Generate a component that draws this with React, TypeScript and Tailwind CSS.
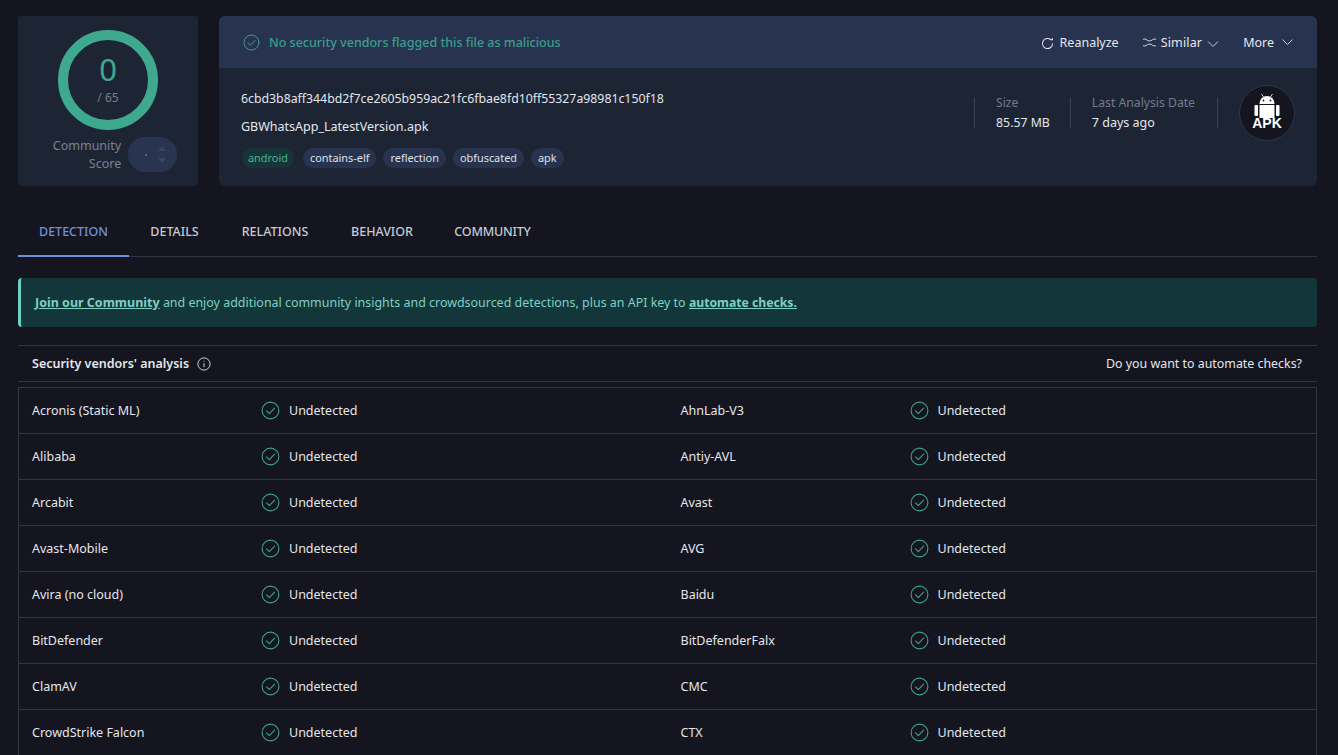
import React from "react";

const F = "font-['Noto_Sans',sans-serif]";

function Check({ className }: { className: string }) {
  return (
    <svg viewBox="0 0 24 24" fill="none" stroke="currentColor" strokeWidth={1.4} strokeLinecap="round" strokeLinejoin="round" className={className}>
      <circle cx="12" cy="12" r="10.6" />
      <path d="M7 12.400l3.500 3.500L17.200 9" />
    </svg>
  );
}

function Chevron({ className }: { className: string }) {
  return (
    <svg viewBox="0 0 12 8" fill="none" stroke="currentColor" strokeWidth={1} className={className}>
      <path d="M1 1.500l5 5 5-5" />
    </svg>
  );
}

const rows = [
  ["Acronis (Static ML)", "AhnLab-V3"],
  ["Alibaba", "Antiy-AVL"],
  ["Arcabit", "Avast"],
  ["Avast-Mobile", "AVG"],
  ["Avira (no cloud)", "Baidu"],
  ["BitDefender", "BitDefenderFalx"],
  ["ClamAV", "CMC"],
  ["CrowdStrike Falcon", "CTX"],
];

const tags = ["contains-elf", "reflection", "obfuscated", "apk"];
const tabs = [
  { t: "DETAILS", w: "w-[91px]" },
  { t: "RELATIONS", w: "w-[110px]" },
  { t: "BEHAVIOR", w: "w-[104px]" },
  { t: "COMMUNITY", w: "w-[117px] tracking-[-0.2px]" },
];

function Cell({ name }: { name: string }) {
  return (
    <div className="flex w-[649px] items-center pl-[13px]">
      <div className="mt-[2px] w-[229px] text-[12.5px] text-[#e4e6ec]">{name}</div>
      <Check className="h-[19px] w-[19px] text-[#3fa08f]" />
      <div className="ml-[9px] mt-[2px] text-[12.5px] text-[#e4e6ec]">Undetected</div>
    </div>
  );
}

export default function App() {
  return (
    <div className={`${F} h-[755px] w-[1338px] overflow-hidden bg-[#14151f] pl-[18px] pr-[21px] pt-[16px]`}>
      <div className="flex h-[170px] gap-[21px]">
        <div className="flex w-[180px] flex-col items-center rounded-[4px] bg-[#1d2535] pt-[14px]">
          <div className="flex h-[100px] w-[100px] flex-col items-center rounded-full border-[10px] border-[#3fa990] pt-[14px]">
            <div className="text-[31px] leading-[30px] text-[#3fa990]">0</div>
            <div className="mt-[6px] text-[12px] leading-[15px] text-[#757c8e]">/ 65</div>
          </div>
          <div className="mt-[6px] flex items-center gap-[7px] pl-[14px]">
            <div className="mt-[1px] text-right text-[12.5px] leading-[18px] text-[#7a8194]">
              Community
              <br />
              Score
            </div>
            <div className="relative h-[35px] w-[49px] rounded-[17px] bg-[#283450]">
              <span className="absolute left-[17px] top-[17px] h-[2px] w-[2px] rounded-full bg-[#6b7389]" />
              <span className="absolute left-[30px] top-[9px] h-0 w-0 border-x-[4px] border-b-[5px] border-x-transparent border-b-[#3a4560]" />
              <span className="absolute left-[30px] top-[21px] h-0 w-0 border-x-[4px] border-t-[5px] border-x-transparent border-t-[#3a4560]" />
            </div>
          </div>
        </div>

        <div className="flex w-[1098px] flex-col overflow-hidden rounded-[6px] bg-[#1d2535]">
          <div className="flex h-[52px] items-center bg-[#28344f] pl-[24px] pr-[23px]">
            <Check className="h-[17px] w-[17px] text-[#3fa08f]" />
            <div className="ml-[9px] mt-[2px] text-[12.5px] font-medium text-[#3b9c8e]">No security vendors flagged this file as malicious</div>
            <div className="ml-auto flex items-center text-[12.5px] text-[#e4e6ec]">
              <svg viewBox="0 0 16 16" fill="none" stroke="currentColor" strokeWidth={1.1} className="mt-[2px] h-[15px] w-[15px]">
                <path d="M13.400 8a5.400 5.400 0 1 1-1.800-4" />
                <path d="M10.800 4.600h3V1.800z" fill="currentColor" stroke="none" />
              </svg>
              <span className="ml-[5px] mt-[2px]">Reanalyze</span>
              <svg viewBox="0 0 16 12" fill="none" stroke="currentColor" strokeWidth={1} className="ml-[23px] mt-[1px] h-[11px] w-[15px]">
                <path d="M1 2.500c3-1.500 4 1.800 7 1.800s4-3.300 7-1.800" />
                <path d="M1 9.500c3 1.500 4-1.800 7-1.800s4 3.300 7 1.800" />
              </svg>
              <span className="ml-[4px] mt-[2px] tracking-[0.15px]">Similar</span>
              <Chevron className="ml-[5px] mt-[3px] h-[8px] w-[12px] text-[#c4c8d2]" />
              <span className="ml-[24px] mt-[2px]">More</span>
              <Chevron className="ml-[7px] h-[8px] w-[13px] text-[#c4c8d2]" />
            </div>
          </div>
          <div className="flex flex-1 pl-[22px] pr-[22px]">
            <div className="flex flex-col">
              <div className="mt-[22px] text-[12.3px] leading-[18px] text-[#e4e6ec]">6cbd3b8aff344bd2f7ce2605b959ac21fc6fbae8fd10ff55327a98981c150f18</div>
              <div className="mt-[10px] text-[12.5px] leading-[18px] text-[#e4e6ec]">GBWhatsApp_LatestVersion.apk</div>
              <div className="ml-[2px] mt-[12px] flex gap-[7px] text-[10.900px] leading-[20px]">
                <span className="rounded-[8px] bg-[#173538] px-[5px] text-[#46b496]">android</span>
                <span className="ml-[3px] rounded-[10px] bg-[#28344f] px-[7px] text-[#dfe2ea]">{tags[0]}</span>
                {tags.slice(1).map((t) => (
                  <span key={t} className="rounded-[10px] bg-[#28344f] px-[7px] text-[#dfe2ea]">{t}</span>
                ))}
              </div>
            </div>
            <div className="ml-auto mt-[17px] flex h-[56px] items-center self-start">
              <div className="flex h-[30px] flex-col justify-center border-l border-[#3a4356] pl-[21px]">
                <div className="text-[12px] leading-[18px] text-[#727a8d]">Size</div>
                <div className="mt-[1px] text-[12.3px] leading-[20px] text-[#e4e6ec]">85.57 MB</div>
              </div>
              <div className="ml-[20px] flex h-[30px] flex-col justify-center border-l border-[#3a4356] pl-[21px]">
                <div className="text-[12.200px] leading-[18px] text-[#727a8d]">Last Analysis Date</div>
                <div className="mt-[1px] text-[12.5px] leading-[20px] text-[#e4e6ec]">7 days ago</div>
              </div>
              <div className="ml-[22px] h-[30px] border-l border-[#3a4356]" />
              <div className="ml-[21px] flex h-[56px] w-[56px] flex-col items-center rounded-full border border-[#2e3648] bg-[#14151f] pt-[6px]">
                <svg viewBox="0 0 26 26" fill="#fff" className="h-[26px] w-[26px]">
                  <path d="M5.500 12a7.500 8 0 0 1 15 0z" />
                  <path d="M7.500 2l2 3M18.500 2l-2 3" stroke="#fff" strokeWidth={0.8} />
                  <circle cx="9.500" cy="8.500" r="0.900" fill="#14151f" />
                  <circle cx="16.500" cy="8.500" r="0.900" fill="#14151f" />
                  <path d="M5.500 13h15v13h-15z" />
                  <rect x="0.500" y="13" width="3.500" height="11" rx="1" />
                  <rect x="22" y="13" width="3.500" height="11" rx="1" />
                </svg>
                <div className="mt-[-2px] font-['Liberation_Sans',sans-serif] text-[14px] font-bold leading-[14px] text-white">APK</div>
              </div>
            </div>
          </div>
        </div>
      </div>

      <div className="mt-[24px] flex h-[47px] border-b border-[#33343f] text-[12.5px] font-medium text-[#c6c9d2]">
        <div className="flex h-[47px] w-[111px] items-center justify-center border-b-2 border-[#6d8fdc] text-[#6d8fdc]">DETECTION</div>
        {tabs.map(({ t, w }) => (
          <div key={t} className={`flex items-center justify-center pb-[2px] ${w}`}>{t}</div>
        ))}
      </div>

      <div className="mt-[21px] flex h-[49px] items-center rounded-[4px] border-l-[3px] border-[#6fd0c4] bg-[#12363a] pl-[14px] text-[12.5px] text-[#7fcfc4]">
        <span className="mt-[2px]">
          <u className="font-bold">Join our Community</u> <span className="text-[12.450px]">and enjoy additional community insights and crowdsourced detections, plus an API key to</span> <u className="text-[12.200px] font-bold">automate checks.</u>
        </span>
      </div>

      <div className="mt-[18px] flex h-[37px] items-center border-y border-[#33343f] pl-[14px] pr-[15px]">
        <span className="mt-[2px] text-[12.5px] font-semibold text-[#e4e6ec]">Security vendors' analysis</span>
        <svg viewBox="0 0 16 16" fill="none" stroke="currentColor" strokeWidth={1} className="ml-[8px] h-[14px] w-[14px] text-[#e4e6ec]">
          <circle cx="8" cy="8" r="7" />
          <path d="M8 7v4.500M8 4.300v1" />
        </svg>
        <span className="ml-auto mt-[2px] text-[12.4px] text-[#e4e6ec]">Do you want to automate checks?</span>
      </div>

      <div className="mt-[5px] border border-[#33343f]">
        {rows.map(([a, b]) => (
          <div key={a} className="flex h-[46px] border-b border-[#33343f]">
            <Cell name={a} />
            <Cell name={b} />
          </div>
        ))}
      </div>
    </div>
  );
}
